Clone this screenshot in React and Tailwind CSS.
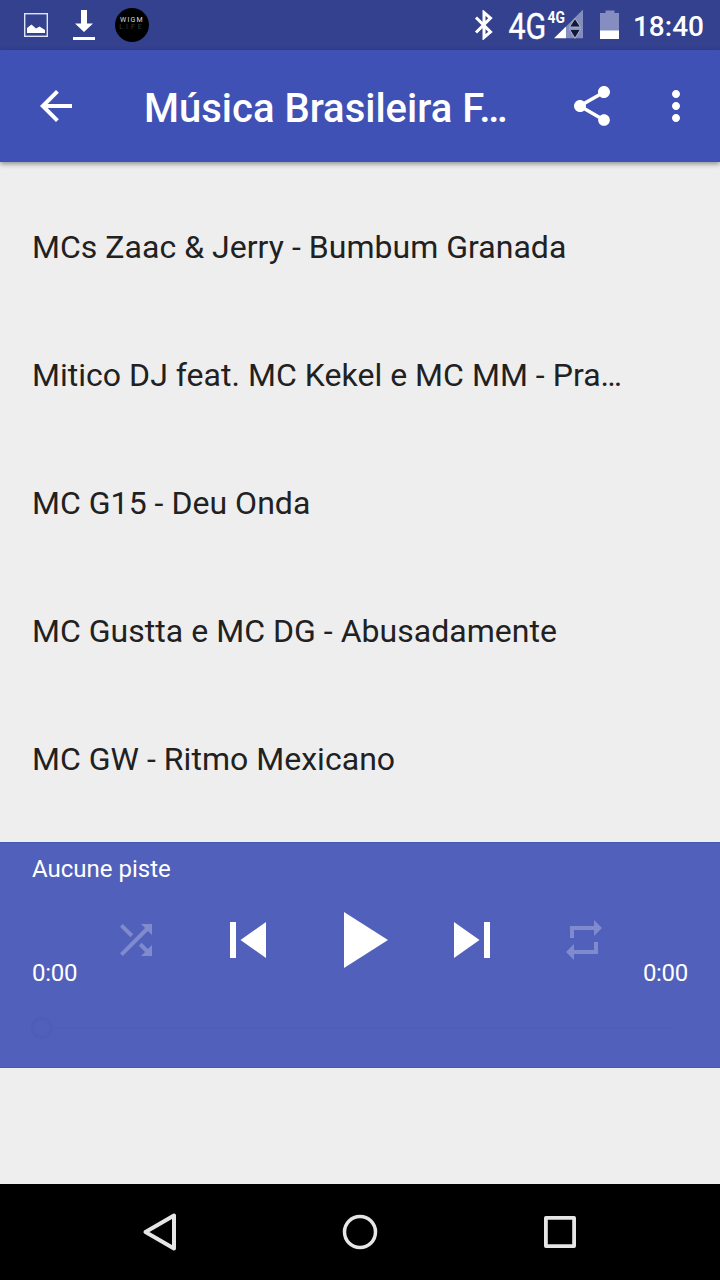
const tracks = [
  "MCs Zaac & Jerry - Bumbum Granada",
  "Mitico DJ feat. MC Kekel e MC MM - Pra…",
  "MC G15 - Deu Onda",
  "MC Gustta e MC DG - Abusadamente",
  "MC GW - Ritmo Mexicano",
];

// material icon on the 24 unit grid
const Icon = ({ d, className }) => (
  <svg viewBox="0 0 24 24" fill="currentColor" className={className}>
    <path d={d} />
  </svg>
);

const StatusBar = () => (
  <div className="flex h-[50px] items-center justify-between bg-[#33418f] pl-6 pr-4 text-white">
    <div className="flex items-center">
      <svg viewBox="0 0 24 24" className="size-6">
        <rect x="0.7" y="0.7" width="22.6" height="22.6" fill="none" stroke="#dfe3f7" strokeWidth="1.4" />
        <path d="M3 20v-5l4.500-3.500 4.500 4 3.500-2 5.500 3.500v3z" fill="currentColor" />
      </svg>
      <svg viewBox="0 0 24 30" className="ml-6 h-[30px] w-6" fill="currentColor">
        <path d="M9 0h6v13.500h6L12 22 3 13.500h6zM1 27h22v3H1z" />
      </svg>
      <div className="ml-[19px] flex size-[34px] flex-col items-center rounded-full bg-black pt-[9px] text-[7px] leading-[7px]">
        <span className="tracking-[1.2px] text-[#dddddd]">WIGM</span>
        <span className="tracking-[3px] text-[#383838]">LIFE</span>
      </div>
    </div>
    <div className="flex items-center">
      <svg viewBox="0 0 20 30" className="h-[30px] w-5" fill="none" stroke="currentColor" strokeWidth="3">
        <path d="M2 7.500l14.500 14.500-6.500 5.500v-25L16.500 8 2 22.500" />
      </svg>
      <svg viewBox="0 0 76 50" className="ml-[14px] h-[50px] w-[76px]" fill="currentColor">
        <text transform="translate(0.500 38.800) scale(0.810 1)" fontFamily="Roboto" fontSize="37.500" stroke="currentColor" strokeWidth="0.400">4G</text>
        <text transform="translate(39.500 22.500) scale(0.870 1)" fontFamily="Roboto" fontWeight="700" fontSize="16">4G</text>
        <path d="M75 9.500v28.800H58V26.500z" fill="#858dbf" />
        <path d="M58 26.500v11.800H46z" />
        <path d="M67 18.500l5.500 8.500h-11zM67 38.300l-5.500-9h11z" fill="#111a35" stroke="#c4c9e4" strokeWidth="0.800" />
      </svg>
      <svg viewBox="0 0 20 30" className="ml-4 h-[30px] w-5">
        <path d="M5.500 0.500h9v2.500H19v26H0V3h5.500z" fill="#858dc1" />
        <path d="M0 20.500h19V29H0z" fill="white" />
      </svg>
      <span className="ml-[13px] pt-1 text-[28px] leading-none font-medium">18:40</span>
    </div>
  </div>
);

const Toolbar = () => (
  <header className="relative flex h-28 items-center bg-[#3f51b5] pr-5 pl-8 text-white shadow-[0_2px_5px_rgba(0,0,0,0.4)]">
    <Icon className="size-12" d="M20 11H7.830l5.590-5.590L12 4l-8 8 8 8 1.410-1.410L7.830 13H20z" />
    <h1 className="ml-16 flex-1 pt-1.5 text-[40px] leading-none font-medium whitespace-nowrap">Música Brasileira F…</h1>
    <Icon
      className="size-12"
      d="M18 16.080c-.760 0-1.440.300-1.960.770L8.910 12.700c.050-.230.090-.460.090-.700s-.040-.470-.090-.700l7.050-4.110c.540.500 1.250.810 2.040.810 1.660 0 3-1.340 3-3s-1.340-3-3-3-3 1.340-3 3c0 .240.040.470.090.700L8.040 9.810C7.500 9.310 6.790 9 6 9c-1.660 0-3 1.340-3 3s1.340 3 3 3c.790 0 1.500-.310 2.040-.810l7.120 4.160c-.050.210-.080.430-.080.650 0 1.610 1.310 2.920 2.920 2.920s2.920-1.310 2.920-2.920-1.310-2.920-2.920-2.920z"
    />
    <Icon
      className="ml-9 size-12"
      d="M12 8c1.100 0 2-.900 2-2s-.900-2-2-2-2 .900-2 2 .900 2 2 2zm0 2c-1.100 0-2 .900-2 2s.900 2 2 2 2-.900 2-2-.900-2-2-2zm0 6c-1.100 0-2 .900-2 2s.900 2 2 2 2-.900 2-2-.900-2-2-2z"
    />
  </header>
);

const Control = ({ label, children }) => (
  <button aria-label={label} className="flex h-24 w-28 items-center justify-center">
    {children}
  </button>
);

const Player = () => (
  <section className="h-[226px] border-y border-[#4858b7] bg-[#5160ba] text-2xl text-white">
    <p className="px-8 pt-3 leading-[28px]">Aucune piste</p>
    <div className="mt-[9px] flex">
      <span className="w-20 self-end pl-8 leading-[30px] tracking-[-0.3px]">0:00</span>
      <Control label="Shuffle">
        <Icon
          className="size-12 text-[#7f8bcd]"
          d="M10.590 9.170L5.410 4 4 5.410l5.170 5.170 1.420-1.410zM14.500 4l2.040 2.040L4 18.590 5.410 20 17.960 7.460 20 9.500V4h-5.500zm.330 9.410l-1.410 1.410 3.130 3.130L14.500 20H20v-5.500l-2.040 2.040-3.130-3.130z"
        />
      </Control>
      <Control label="Previous">
        <Icon className="size-[72px]" d="M6 6h2v12H6zm3.500 6l8.500 6V6z" />
      </Control>
      <Control label="Play">
        <Icon className="size-24" d="M8 5v14l11-7z" />
      </Control>
      <Control label="Next">
        <Icon className="size-[72px]" d="M6 18l8.500-6L6 6v12zM16 6v12h2V6h-2z" />
      </Control>
      <Control label="Repeat">
        <Icon className="size-12 text-[#7f8bcd]" d="M7 7h10v3l4-4-4-4v3H5v6h2V7zm10 10H7v-3l-4 4 4 4v-3h12v-6h-2v4z" />
      </Control>
      <span className="flex w-20 justify-end self-end pr-8 leading-[30px] tracking-[-0.3px]">0:00</span>
    </div>
    <div className="mt-[29px] flex items-center pr-12 pl-[31px]">
      <div className="size-[22px] rounded-full border-3 border-[#4e5db8]" />
      <div className="h-0.5 flex-1 bg-[#4f5eb8]" />
    </div>
  </section>
);

const NavBar = () => (
  <nav className="flex h-24 items-center justify-between bg-black px-[140px]">
    <svg viewBox="0 0 40 40" className="size-10" fill="none" stroke="#e6e6e6" strokeWidth="4" strokeLinejoin="round">
      <path d="M34 3.500v33L5.500 20z" />
    </svg>
    <svg viewBox="0 0 40 40" className="size-10" fill="none" stroke="#e6e6e6" strokeWidth="3.500">
      <circle cx="20" cy="20" r="15.500" />
    </svg>
    <svg viewBox="0 0 40 40" className="size-10" fill="none" stroke="#e6e6e6" strokeWidth="3.800" strokeLinejoin="round">
      <path d="M5.900 5.900h28.200v28.200H5.900z" />
    </svg>
  </nav>
);

const App = () => {
  return (
    <div className="flex h-[1280px] w-[720px] flex-col overflow-hidden bg-[#eeeeee] font-['Roboto',sans-serif]">
      <StatusBar />
      <Toolbar />
      <ul className="h-[680px] overflow-hidden pt-[21px]">
        {tracks.map((track) => (
          <li key={track} className="flex h-32 items-center px-8 text-[32px] tracking-[0.03px] whitespace-nowrap text-[#212121]">
            {track}
          </li>
        ))}
      </ul>
      <Player />
      <div className="flex-1" />
      <NavBar />
    </div>
  );
};

export default App;
